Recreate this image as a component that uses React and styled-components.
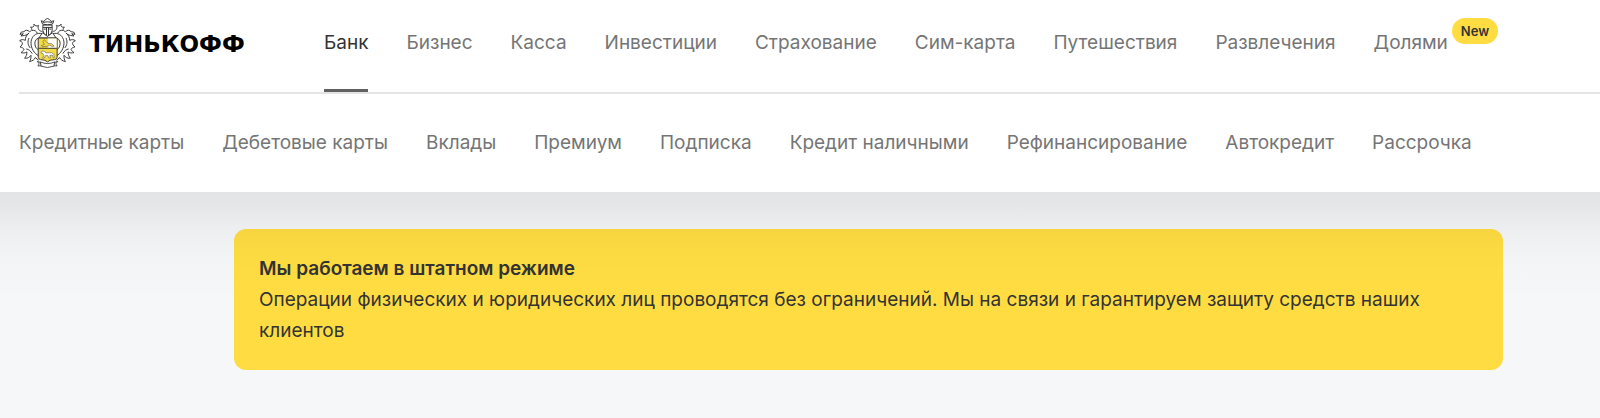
import React from "react";
import styled, { createGlobalStyle, css } from "styled-components";

const GlobalStyle = createGlobalStyle`
  *, *::before, *::after { box-sizing: border-box; }
  body {
    margin: 0;
    background: #f6f7f8;
    color: #333333;
    font-family: Inter, "Liberation Sans", sans-serif;
    font-size: 19px;
    line-height: 31px;
    overflow-x: hidden;
  }
`;

const Header = styled.header`
  background: #ffffff;
  padding-left: 19px;
`;

const PrimaryBar = styled.div`
  display: flex;
  align-items: stretch;
  height: 94px;
  border-bottom: 2px solid #e4e4e4;
`;

const Brand = styled.a`
  display: flex;
  align-items: center;
  gap: 13px;
  width: 305px;
  height: 87px;
  flex: none;
  color: #000000;
  text-decoration: none;
`;

const Wordmark = styled.span`
  font-family: "DejaVu Sans", sans-serif;
  font-weight: 700;
  font-size: 23px;
  line-height: 24px;
`;

const NavList = styled.ul`
  display: flex;
  gap: 38px;
  margin: 0;
  padding: 0;
  list-style: none;
  white-space: nowrap;
`;

const NavItem = styled.li`
  position: relative;
  display: flex;
`;

const NavLink = styled.a`
  color: #757575;
  text-decoration: none;
  padding: ${({ $secondary }) => ($secondary ? "33px 0 34px" : "27px 0 31px")};
  ${({ $active }) =>
    $active &&
    css`
      color: #333333;
      border-bottom: 3px solid #616161;
    `}
`;

const Badge = styled.span`
  position: absolute;
  left: 100%;
  top: 18px;
  margin-left: 4px;
  padding: 0 9px;
  border-radius: 13px;
  background: #ffdd42;
  color: #333333;
  font-size: 13px;
  font-weight: 600;
  line-height: 26px;
`;

const Main = styled.main`
  position: relative;
  padding: 37px 97px 48px 234px;

  &::after {
    content: "";
    position: absolute;
    inset: 0 0 auto;
    height: 110px;
    background: linear-gradient(
      rgba(0, 0, 0, 0.08),
      rgba(0, 0, 0, 0.065) 14%,
      rgba(0, 0, 0, 0.035) 34%,
      rgba(0, 0, 0, 0.012) 62%,
      rgba(0, 0, 0, 0)
    );
    pointer-events: none;
  }
`;

const Notice = styled.section`
  padding: 24px 25px;
  border-radius: 12px;
  background: #ffdd42;
`;

const NoticeTitle = styled.h2`
  margin: 0;
  font-size: 19px;
  font-weight: 600;
  line-height: 31px;
`;

const NoticeText = styled.p`
  margin: 0;
`;

const primary = [
  "Банк",
  "Бизнес",
  "Касса",
  "Инвестиции",
  "Страхование",
  "Сим-карта",
  "Путешествия",
  "Развлечения",
  "Долями",
];

const secondary = [
  "Кредитные карты",
  "Дебетовые карты",
  "Вклады",
  "Премиум",
  "Подписка",
  "Кредит наличными",
  "Рефинансирование",
  "Автокредит",
  "Рассрочка",
];

function Mantling() {
  return (
    <>
      <path d="M98 64C88 64 82 56 86 46C80 50 76 47 72 42C74 49 69 53 62 51C68 57 66 62 59 65C53 59 46 59 42 65L34 66L30 73L40 71L33 78L44 76C50 75 54 72 57 69" />
      <path d="M57 69C48 77 46 84 46 91C40 88 34 88 29 92C36 94 39 99 36 105L30 111C36 112 40 114 42 118C39 124 36 126 33 128C40 130 46 129 51 126C51 135 48 140 44 145C53 146 59 142 63 136C64 144 62 150 59 155C68 153 74 149 76 143L86 151" />
      <path d="M97 71C82 67 70 74 65 88C60 103 66 120 77 131L86 138" />
      <path d="M85 84C76 89 73 96 76 108C78 114 81 117 85 119" />
      <path d="M66 61C74 59 80 64 82 69M57 84C52 96 54 106 61 114M49 117C56 118 62 123 67 131" />
    </>
  );
}

function Crest() {
  return (
    <svg width="57" height="51" viewBox="27 24 172 153" aria-hidden="true">
      <g fill="none" stroke="#333333" strokeWidth="2.9" strokeLinejoin="round">
        <Mantling />
        <g transform="translate(226 0) scale(-1 1)">
          <Mantling />
        </g>
        <path fill="#fff" d="M98 42L94 32L102 34L107 28L113 25L119 28L124 34L132 32L128 42Q113 46 98 42Z" />
        <path d="M99 37Q113 33 127 37" />
        <path fill="#fff" d="M99 45H127V61L123 72L113 79L103 72L99 61Z" />
        <path d="M99 52H127M110 52V76M116 52V76M102 57H108M118 57H124" />
        <path fill="#fff" d="M98 68L87 84H139L128 68L113 79Z" />
        <path fill="#f5dc45" d="M85 84H142V142Q142 148 135 149L121 151L113 156L105 151L92 149Q85 148 85 142Z" />
        <path fill="#fff" stroke="none" d="M114 85.4H140.6V114H114Z" />
        <path d="M86 115H141" />
      </g>
      <g fill="#fff" stroke="#5a5a5a" strokeWidth="1.8" strokeLinejoin="round">
        <path fill="#f5dc45" d="M94 107L104 103L99 95L103 89L109 94L114 100L125 101L133 108L128 110L120 106L111 109L97 110Z" />
        <path d="M93 129L97 123L103 124L109 129L125 128L132 133L134 143L130 143L128 136L120 136L122 144L117 144L114 137L107 137L103 145L98 145L102 137L99 131Z" />
      </g>
      <g fill="#fff" stroke="#333333" strokeWidth="2.6" strokeLinejoin="round">
        <path d="M92 158L82 154L88 162L84 168L95 168ZM134 158L144 154L138 162L142 168L131 168Z" />
        <path d="M91 156Q113 166 135 156L132 169Q113 177 94 169Z" />
      </g>
    </svg>
  );
}

export default function App() {
  return (
    <>
      <GlobalStyle />
      <Header>
        <PrimaryBar>
          <Brand href="#">
            <Crest />
            <Wordmark>ТИНЬКОФФ</Wordmark>
          </Brand>
          <nav aria-label="Разделы">
            <NavList>
              {primary.map((label, i) => (
                <NavItem key={label}>
                  <NavLink href="#" $active={i === 0} aria-current={i === 0 ? "page" : undefined}>
                    {label}
                  </NavLink>
                  {label === "Долями" && <Badge>New</Badge>}
                </NavItem>
              ))}
            </NavList>
          </nav>
        </PrimaryBar>
        <nav aria-label="Продукты банка">
          <NavList>
            {secondary.map((label) => (
              <NavItem key={label}>
                <NavLink href="#" $secondary>
                  {label}
                </NavLink>
              </NavItem>
            ))}
          </NavList>
        </nav>
      </Header>
      <Main>
        <Notice>
          <NoticeTitle>Мы работаем в штатном режиме</NoticeTitle>
          <NoticeText>
            Операции физических и юридических лиц проводятся без ограничений. Мы на связи и
            гарантируем защиту средств наших клиентов
          </NoticeText>
        </Notice>
      </Main>
    </>
  );
}
